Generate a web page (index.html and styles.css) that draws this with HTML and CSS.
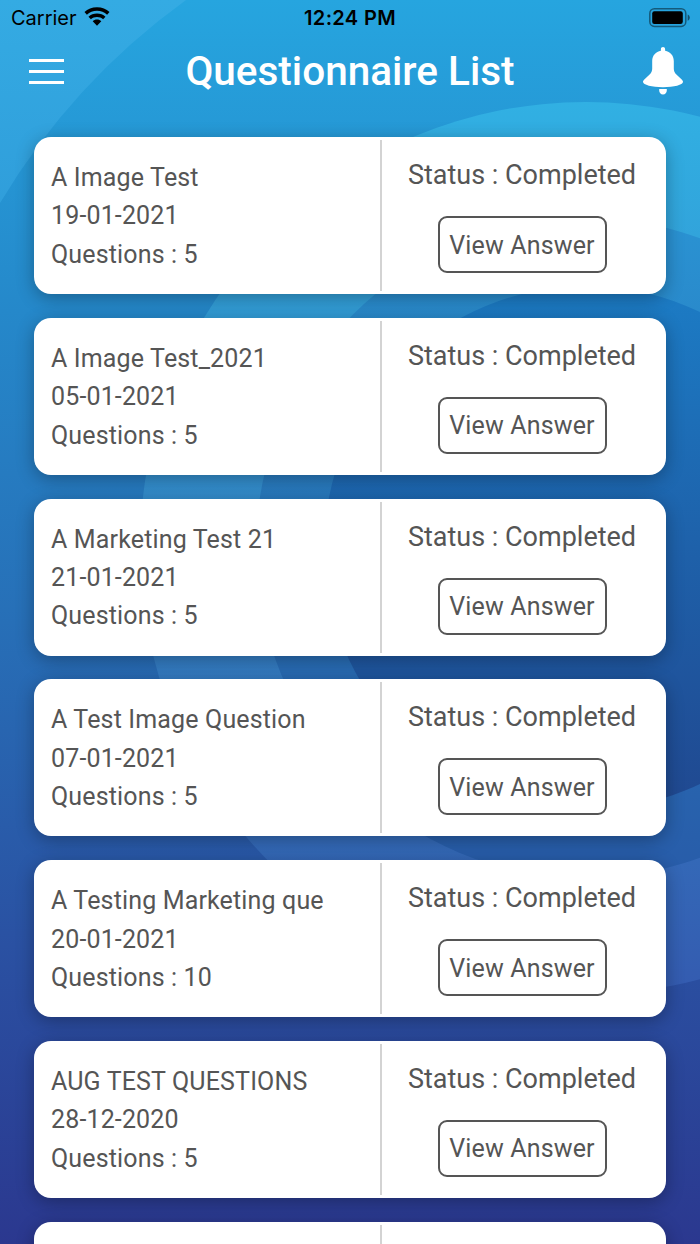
FILE: index.html
```
<!DOCTYPE html>
<html lang="en">
<head>
  <meta charset="UTF-8">
  <meta name="viewport" content="width=device-width, initial-scale=1.0">
  <title>Questionnaire List</title>
  <link rel="stylesheet" href="styles.css">
</head>
<body>
  <div class="screen">
    <!-- Background rings -->
    <svg class="backdrop" viewBox="0 0 700 1244">
      <defs>
        <linearGradient id="base" x1="0" y1="0" x2="0" y2="1244" gradientUnits="userSpaceOnUse">
          <stop offset="0" stop-color="#26a5df"/>
          <stop offset="0.25" stop-color="#2588ca"/>
          <stop offset="0.5" stop-color="#276fb7"/>
          <stop offset="0.75" stop-color="#2a52a3"/>
          <stop offset="1" stop-color="#2b388f"/>
        </linearGradient>
        <linearGradient id="corner" x1="0" y1="0" x2="0" y2="250" gradientUnits="userSpaceOnUse">
          <stop offset="0" stop-color="#34abe3"/>
          <stop offset="1" stop-color="#2f9bd9"/>
        </linearGradient>
        <linearGradient id="outer" x1="0" y1="103" x2="0" y2="993" gradientUnits="userSpaceOnUse">
          <stop offset="0" stop-color="#31b0e3"/>
          <stop offset="0.5" stop-color="#3387c8"/>
          <stop offset="1" stop-color="#345bb0"/>
        </linearGradient>
        <linearGradient id="middle" x1="0" y1="218" x2="0" y2="878" gradientUnits="userSpaceOnUse">
          <stop offset="0" stop-color="#2a93d3"/>
          <stop offset="0.5" stop-color="#2874b9"/>
          <stop offset="1" stop-color="#285ca9"/>
        </linearGradient>
        <linearGradient id="inner" x1="0" y1="286" x2="0" y2="810" gradientUnits="userSpaceOnUse">
          <stop offset="0" stop-color="#1c7cc5"/>
          <stop offset="0.5" stop-color="#1e61aa"/>
          <stop offset="1" stop-color="#204890"/>
        </linearGradient>
      </defs>
      <rect width="700" height="1244" fill="url(#base)"/>
      <path d="M0 0H186A680 680 0 0 0 0 203Z" fill="url(#corner)"/>
      <circle cx="586" cy="548" r="446" fill="url(#outer)"/>
      <circle cx="586" cy="548" r="330" fill="url(#middle)"/>
      <circle cx="586" cy="548" r="262" fill="url(#inner)"/>
    </svg>

    <div class="status-bar">
      <div class="carrier">
        <span>Carrier</span>
        <svg class="wifi" width="26" height="19" viewBox="0 0 26 19">
          <path d="M13 0.2C8 0.2 3.7 2.1 0.5 5.1L2.9 7.7C5.6 5.2 9.1 3.7 13 3.7s7.4 1.5 10.1 4l2.4-2.6C22.3 2.1 18 0.2 13 0.2z"/>
          <path d="M13 6.5c-3.3 0-6.2 1.2-8.5 3.2l2.4 2.5c1.600-1.400 3.700-2.300 6.100-2.300s4.500.9 6.100 2.300l2.400-2.500C19.200 7.700 16.300 6.500 13 6.500z"/>
          <path d="M13 12.6c-1.7 0-3.2.6-4.300 1.600L13 18.700l4.300-4.500c-1.100-1-2.600-1.600-4.300-1.600z"/>
        </svg>
      </div>
      <span class="time">12:24 PM</span>
      <svg class="battery" width="42" height="20" viewBox="0 0 42 20">
        <rect class="battery-case" x="0.8" y="0.8" width="36" height="17.6" rx="4.6"/>
        <rect x="3.2" y="3.3" width="30.6" height="12.600" rx="2.2"/>
        <path class="battery-tip" d="M38.700 6.400c1.300.5 2.100 1.700 2.100 3.200s-.8 2.700-2.100 3.200z"/>
      </svg>
    </div>

    <header class="header">
      <button class="menu-btn" aria-label="Menu">
        <span></span>
        <span></span>
        <span></span>
      </button>
      <h1>Questionnaire List</h1>
      <button class="bell-btn" aria-label="Notifications">
        <svg width="40" height="48" viewBox="0 0 40 48">
          <path d="M20 0c-1.200 0-2.100.9-2.100 2.100v1.700C12.800 4.500 9.200 8.800 9.200 14v7.500c0 2.600-.8 4.200-2.600 5.900L1.300 32.400C.4 33.300 0 34 0 34.800c0 3.200 9 5.400 20 5.400s20-2.200 20-5.400c0-.8-.4-1.500-1.300-2.400l-5.300-5c-1.800-1.700-2.600-3.300-2.600-5.900V14c0-5.200-3.600-9.500-8.700-10.200V2.100C22.100.9 21.200 0 20 0z"/>
          <path d="M16.200 42h7.600v1.500c0 2.300-1.500 4-3.800 4s-3.800-1.700-3.800-4z"/>
        </svg>
      </button>
    </header>

    <main class="list">
      <div class="card">
        <div class="info">
          <p>A Image Test</p>
          <p>19-01-2021</p>
          <p>Questions : 5</p>
        </div>
        <div class="action">
          <p class="state">Status : Completed</p>
          <button class="view-btn">View Answer</button>
        </div>
      </div>

      <div class="card">
        <div class="info">
          <p>A Image Test_2021</p>
          <p>05-01-2021</p>
          <p>Questions : 5</p>
        </div>
        <div class="action">
          <p class="state">Status : Completed</p>
          <button class="view-btn">View Answer</button>
        </div>
      </div>

      <div class="card">
        <div class="info">
          <p>A Marketing Test 21</p>
          <p>21-01-2021</p>
          <p>Questions : 5</p>
        </div>
        <div class="action">
          <p class="state">Status : Completed</p>
          <button class="view-btn">View Answer</button>
        </div>
      </div>

      <div class="card">
        <div class="info">
          <p>A Test Image Question</p>
          <p>07-01-2021</p>
          <p>Questions : 5</p>
        </div>
        <div class="action">
          <p class="state">Status : Completed</p>
          <button class="view-btn">View Answer</button>
        </div>
      </div>

      <div class="card">
        <div class="info">
          <p>A Testing Marketing que</p>
          <p>20-01-2021</p>
          <p>Questions : 10</p>
        </div>
        <div class="action">
          <p class="state">Status : Completed</p>
          <button class="view-btn">View Answer</button>
        </div>
      </div>

      <div class="card">
        <div class="info">
          <p>AUG TEST QUESTIONS</p>
          <p>28-12-2020</p>
          <p>Questions : 5</p>
        </div>
        <div class="action">
          <p class="state">Status : Completed</p>
          <button class="view-btn">View Answer</button>
        </div>
      </div>

      <!-- next card, cut off by the bottom of the screen -->
      <div class="card">
        <div class="info"></div>
        <div class="action"></div>
      </div>
    </main>
  </div>
</body>
</html>
```
FILE: styles.css
```
* {
  margin: 0;
  padding: 0;
  box-sizing: border-box;
}

body {
  width: 700px;
  height: 1244px;
  overflow: hidden;
  font-family: Roboto, sans-serif;
  color: #555;
}

button {
  background: none;
  border: none;
  font-family: inherit;
  color: inherit;
}

.screen {
  position: relative;
  height: 1244px;
  overflow: hidden;
}

.backdrop {
  position: absolute;
  top: 0;
  left: 0;
  width: 100%;
  height: 100%;
  z-index: -1;
}

/* Status bar */
.status-bar {
  display: grid;
  grid-template-columns: 1fr auto 1fr;
  align-items: center;
  height: 35px;
  padding: 0 9px 0 11px;
  font-family: Inter, sans-serif;
  font-size: 20px;
  color: #000;
}

.carrier {
  display: flex;
  align-items: center;
  gap: 7px;
}

.wifi {
  margin-top: -2px;
}

.time {
  margin-right: 2px;
  font-weight: 600;
  letter-spacing: 0.35px;
}

.battery {
  justify-self: end;
}

.battery-case {
  fill: none;
  stroke: #000;
  stroke-opacity: 0.45;
  stroke-width: 1.5;
}

.battery-tip {
  fill-opacity: 0.5;
}

/* Header */
.header {
  display: flex;
  align-items: center;
  height: 72px;
  padding: 0 17px 0 29px;
  color: #fff;
}

.header h1 {
  flex: 1;
  margin-right: 12px;
  font-size: 40.5px;
  font-weight: 500;
  text-align: center;
}

.menu-btn {
  display: flex;
  flex-direction: column;
  gap: 8px;
  width: 40px;
}

.menu-btn span {
  width: 35px;
  height: 3px;
  background: #fff;
}

.bell-btn svg {
  display: block;
  fill: #fff;
}

/* Questionnaire cards */
.list {
  display: flex;
  flex-direction: column;
  gap: 23.8px;
  padding: 30px 34px 0;
}

.card {
  display: flex;
  flex: none;
  height: 157px;
  padding: 3px 0;
  background: #fff;
  border-radius: 17px;
  box-shadow: 0 4px 18px rgba(0, 0, 0, 0.3);
}

.info {
  width: 348px;
  padding: 19px 0 0 17px;
  border-right: 2px solid #d3d3d3;
  font-size: 25px;
  line-height: 38.4px;
  letter-spacing: 0.15px;
}

.action {
  flex: 1;
  display: flex;
  flex-direction: column;
  align-items: center;
  padding: 18px 4px 0 0;
}

.state {
  font-size: 27px;
  line-height: 34px;
}

.view-btn {
  width: 169px;
  height: 57px;
  margin-top: 24px;
  padding-top: 1px;
  border: 2px solid #555;
  border-radius: 9px;
  font-size: 25px;
  letter-spacing: 0.15px;
}
```
